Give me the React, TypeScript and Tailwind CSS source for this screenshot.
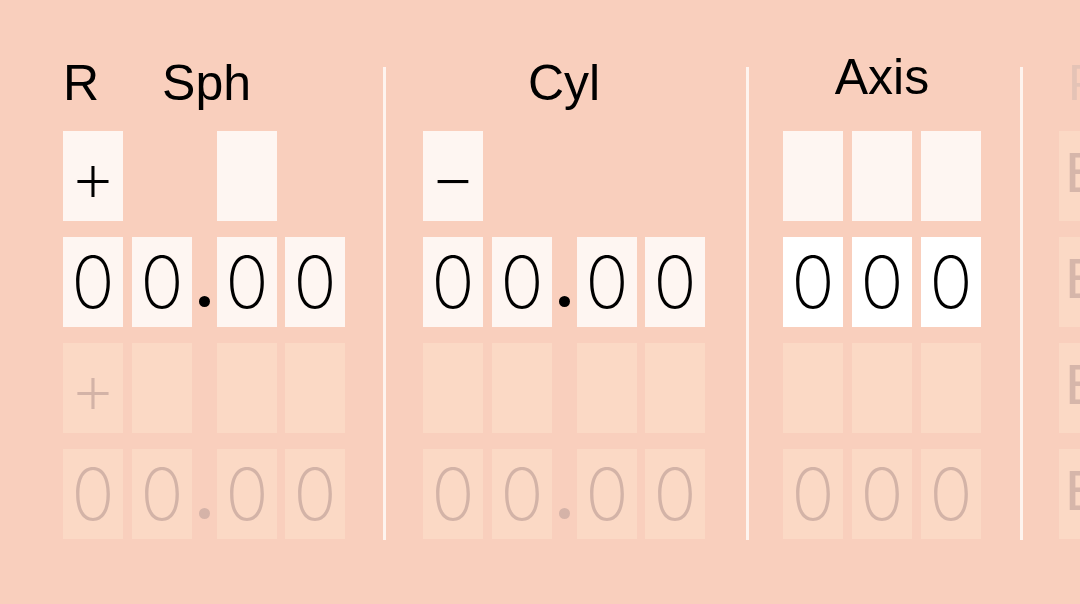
import type { ReactNode } from "react";

type Tone = "light" | "white" | "faded" | "none";

const toneClass: Record<Tone, string> = {
  light: "bg-[#fef6f2] text-black",
  white: "bg-white text-black",
  faded: "bg-[#fbd9c5] text-[#d3b3a7]",
  none: "bg-transparent",
};

function Cell({ tone, children }: { tone: Tone; children?: ReactNode }) {
  return (
    <div
      className={`flex h-[90px] w-[60px] shrink-0 items-center justify-center font-['Inter',sans-serif] text-[72px] leading-none font-extralight ${toneClass[tone]}`}
    >
      {children}
    </div>
  );
}

function Dot({ faded }: { faded?: boolean }) {
  return (
    <div className="flex h-[90px] w-[25px] shrink-0 items-end justify-center pb-[20px]">
      <span
        className={`block size-[11px] rounded-full ${faded ? "bg-[#d5b3a8]" : "bg-black"}`}
      />
    </div>
  );
}

/** Four-cell decimal entry: sign/tens, units, dot, tenths, hundredths */
function DecimalRow({ tones, values, faded }: { tones: Tone[]; values: string[]; faded?: boolean }) {
  return (
    <div className="flex">
      <Cell tone={tones[0]}>{values[0]}</Cell>
      <div className="w-[9px]" />
      <Cell tone={tones[1]}>{values[1]}</Cell>
      {faded !== undefined ? <Dot faded={faded} /> : <div className="w-[25px]" />}
      <Cell tone={tones[2]}>{values[2]}</Cell>
      <div className="w-[8px]" />
      <Cell tone={tones[3]}>{values[3]}</Cell>
    </div>
  );
}

function AxisRow({ tone, values }: { tone: Tone; values: string[] }) {
  return (
    <div className="flex gap-[9px]">
      {values.map((v, i) => (
        <Cell key={i} tone={tone}>
          {v}
        </Cell>
      ))}
    </div>
  );
}

function Divider() {
  return <div className="mt-[67px] h-[473px] w-[3px] shrink-0 bg-[#fef4ef]" />;
}

const heading = "h-[50px] font-['Liberation_Sans',Arial,sans-serif] text-[50px] leading-none";

export default function App() {
  const zeros = ["0", "0", "0", "0"];
  const blank = ["", "", "", ""];

  return (
    <div className="flex h-[604px] w-[1080px] items-start overflow-hidden bg-[#f9cfbd] pl-[63px]">
      {/* Right eye: sphere */}
      <section className="flex w-[282px] shrink-0 flex-col pt-[58px]">
        <div className={`flex gap-[63px] text-black ${heading}`}>
          <span>R</span>
          <span>Sph</span>
        </div>
        <div className="mt-[23px] flex flex-col gap-[16px]">
          <DecimalRow tones={["light", "none", "light", "none"]} values={["+", "", "", ""]} />
          <DecimalRow tones={["light", "light", "light", "light"]} values={zeros} faded={false} />
          <DecimalRow tones={["faded", "faded", "faded", "faded"]} values={["+", "", "", ""]} />
          <DecimalRow tones={["faded", "faded", "faded", "faded"]} values={zeros} faded />
        </div>
      </section>

      <div className="ml-[38px] mr-[37px] flex">
        <Divider />
      </div>

      {/* Cylinder */}
      <section className="flex w-[282px] shrink-0 flex-col pt-[58px]">
        <div className={`text-center text-black ${heading}`}>Cyl</div>
        <div className="mt-[23px] flex flex-col gap-[16px]">
          <DecimalRow tones={["light", "none", "none", "none"]} values={["\u2212", "", "", ""]} />
          <DecimalRow tones={["light", "light", "light", "light"]} values={zeros} faded={false} />
          <DecimalRow tones={["faded", "faded", "faded", "faded"]} values={blank} />
          <DecimalRow tones={["faded", "faded", "faded", "faded"]} values={zeros} faded />
        </div>
      </section>

      <div className="ml-[41px] mr-[34px] flex">
        <Divider />
      </div>

      {/* Axis */}
      <section className="flex w-[198px] shrink-0 flex-col pt-[52px]">
        <div className={`text-center text-black ${heading}`}>Axis</div>
        <div className="mt-[29px] flex flex-col gap-[16px]">
          <AxisRow tone="light" values={["", "", ""]} />
          <AxisRow tone="white" values={["0", "0", "0"]} />
          <AxisRow tone="faded" values={["", "", ""]} />
          <AxisRow tone="faded" values={["0", "0", "0"]} />
        </div>
      </section>

      <div className="ml-[39px] mr-[36px] flex">
        <Divider />
      </div>

      {/* Next field, cut off by the viewport */}
      <section className="flex w-[120px] shrink-0 flex-col pt-[58px]">
        <div className={`pl-[9px] text-[#e4c3b6] ${heading}`}>P</div>
        <div className="mt-[23px] flex flex-col gap-[16px]">
          {[0, 1, 2, 3].map((i) => (
            <div
              key={i}
              className="flex h-[90px] w-[60px] items-center bg-[#fbd9c5] pl-[6px] font-['Liberation_Mono',monospace] text-[60px] leading-none text-[#d6b6aa]"
            >
              E
            </div>
          ))}
        </div>
      </section>
    </div>
  );
}
